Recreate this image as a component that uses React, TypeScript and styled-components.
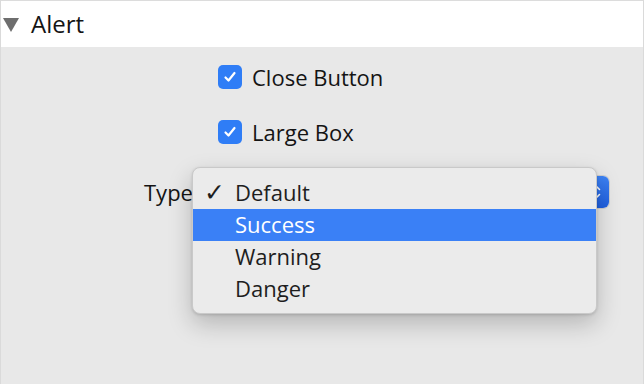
import React from "react";
import styled, { createGlobalStyle } from "styled-components";

const Global = createGlobalStyle`
  html, body { margin: 0; padding: 0; background: #e8e8e8; }
  * { box-sizing: border-box; }
`;

const Page = styled.div`
  position: relative;
  width: 644px;
  height: 384px;
  background: #e8e8e8;
  border-left: 1px solid #dadada;
  border-right: 1px solid #dadada;
  font-family: "Open Sans", "Liberation Sans", sans-serif;
  color: #141414;
  overflow: hidden;
`;

const Header = styled.div`
  height: 47px;
  background: #ffffff;
  border-top: 1px solid #dcdcdc;
  display: flex;
  align-items: center;
  gap: 12px;
  padding-left: 2px;
`;

const Triangle = styled.div`
  width: 0;
  height: 0;
  border-left: 8px solid transparent;
  border-right: 8px solid transparent;
  border-top: 14px solid #6e6e6e;
  margin-top: 1px;
`;

const Title = styled.span`
  font-size: 24px;
  line-height: 1;
`;

const Form = styled.div`
  display: flex;
  flex-direction: column;
  padding-top: 18px;
`;

const CheckRow = styled.label<{ gap: number }>`
  display: flex;
  align-items: center;
  gap: 10px;
  height: 24px;
  margin-left: 217px;
  margin-bottom: ${(p) => p.gap}px;
  font-size: 22px;
`;

const Box = styled.span`
  width: 24px;
  height: 24px;
  border-radius: 5px;
  background: #2f7df6;
  display: flex;
  align-items: center;
  justify-content: center;
`;

const TypeRow = styled.div`
  display: flex;
  align-items: center;
  height: 32px;
  margin-left: 143px;
`;

const Label = styled.span`
  font-size: 22px;
  width: 49px;
  white-space: nowrap;
`;

const SelectButton = styled.div`
  width: 416px;
  height: 32px;
  border-radius: 6px;
  background: #ffffff;
  display: flex;
  justify-content: flex-end;
  box-shadow: 0 0 0 1px #cfcfcf;
`;

const Stepper = styled.div`
  width: 26px;
  height: 32px;
  border-radius: 0 6px 6px 0;
  background: linear-gradient(#3d82f4, #1f5fe0);
  display: flex;
  align-items: center;
  justify-content: center;
`;

const Popup = styled.div`
  position: absolute;
  left: 191px;
  top: 167px;
  width: 405px;
  padding: 9px 0 8px;
  background: #ebebeb;
  border-radius: 8px;
  border: 1px solid #c9c9c9;
  box-shadow: 0 10px 24px rgba(0, 0, 0, 0.22), 0 1px 3px rgba(0, 0, 0, 0.15);
`;

const Item = styled.div<{ active?: boolean }>`
  height: 32px;
  display: flex;
  align-items: center;
  padding-bottom: 2px;
  font-size: 22px;
  color: ${(p) => (p.active ? "#ffffff" : "#1e1e1e")};
  background: ${(p) => (p.active ? "#3a80f6" : "transparent")};
`;

const Mark = styled.span`
  width: 42px;
  padding-left: 11px;
  font-family: "DejaVu Sans", sans-serif;
  font-size: 25px;
  font-weight: bold;
  line-height: 1;
`;

const items = ["Default", "Success", "Warning", "Danger"];

const Tick = () => (
  <svg width="16" height="16" viewBox="0 0 16 16">
    <polyline
      points="3.5,8.5 6.5,11.5 12.5,4"
      fill="none"
      stroke="#fff"
      strokeWidth="2.2"
      strokeLinecap="round"
      strokeLinejoin="round"
    />
  </svg>
);

export default function App() {
  return (
    <>
      <Global />
      <Page>
        <Header>
          <Triangle />
          <Title>Alert</Title>
        </Header>
        <Form>
          <CheckRow gap={31}>
            <Box>
              <Tick />
            </Box>
            Close Button
          </CheckRow>
          <CheckRow gap={32}>
            <Box>
              <Tick />
            </Box>
            Large Box
          </CheckRow>
          <TypeRow>
            <Label>Type:</Label>
            <SelectButton>
              <Stepper>
                <svg width="10" height="18" viewBox="0 0 10 18">
                  <polyline points="1.5,6.5 5,3 8.5,6.5" fill="none" stroke="#fff" strokeWidth="1.6" strokeLinecap="round" strokeLinejoin="round" />
                  <polyline points="1.5,11.5 5,15 8.5,11.5" fill="none" stroke="#fff" strokeWidth="1.6" strokeLinecap="round" strokeLinejoin="round" />
                </svg>
              </Stepper>
            </SelectButton>
          </TypeRow>
        </Form>
        <Popup>
          {items.map((t, i) => (
            <Item key={t} active={i === 1}>
              <Mark>{i === 0 ? "✓" : ""}</Mark>
              {t}
            </Item>
          ))}
        </Popup>
      </Page>
    </>
  );
}
